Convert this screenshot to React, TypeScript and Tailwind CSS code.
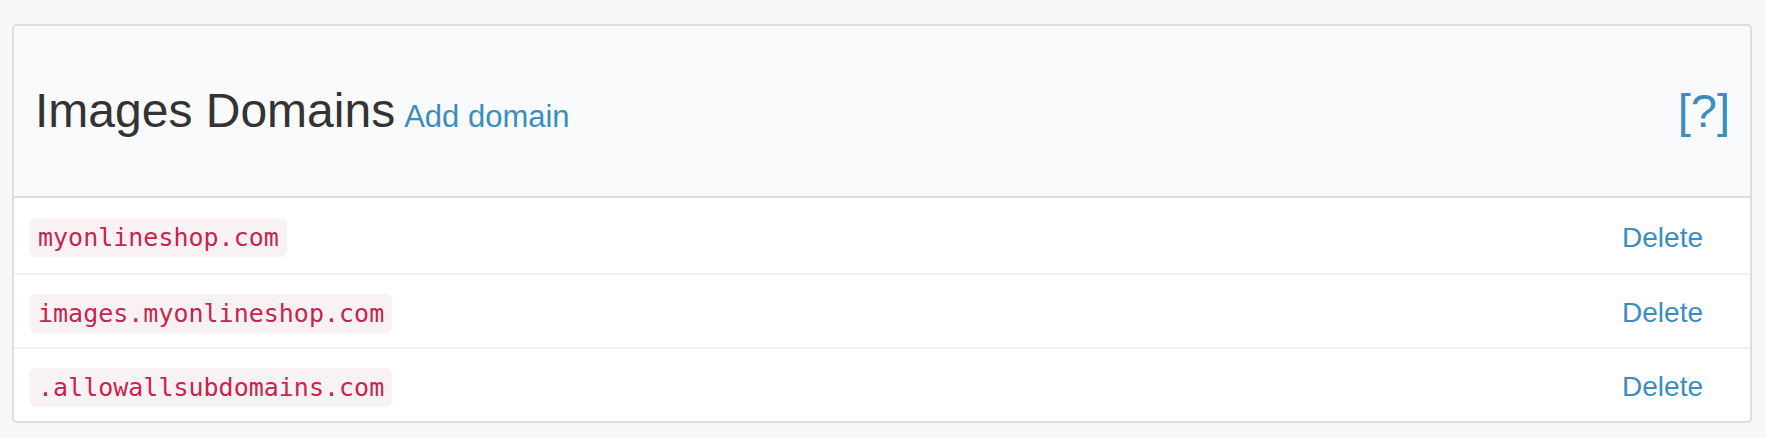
const DOMAINS = ["myonlineshop.com", "images.myonlineshop.com", ".allowallsubdomains.com"];

/** Panel listing the domains images may be loaded from. */
export default function App() {
  return (
    <div className="min-h-[438px] bg-[#f7f7f7] pt-[24px] pb-[15px] pl-[12px] pr-[14px] font-['Liberation_Sans',Arial,sans-serif]">
      <div className="rounded-[5px] border-2 border-[#dedede] bg-white">
        <div className="flex h-[172px] items-baseline justify-between rounded-t-[4px] border-b-2 border-[#dcdcdc] bg-[#f9fafb] pl-[21px] pr-[20px] pt-[61px]">
          <h1 className="flex items-baseline text-[48px] leading-none text-[#333333]">
            Images Domains
            <a href="#" className="ml-[9px] text-[31px] text-[#3c8dbc]">
              Add domain
            </a>
          </h1>
          <a href="#" className="text-[47px] leading-none text-[#3c8dbc]">
            [?]
          </a>
        </div>

        {DOMAINS.map((d, i) => (
          <div
            key={d}
            className={
              i === 0
                ? "flex h-[75px] items-center justify-between pl-[16px] pr-[47px] pt-[4px]"
                : "flex h-[74px] items-center justify-between border-t-2 border-[#f0f0f0] pl-[16px] pr-[47px] pt-[4px]"
            }
          >
            <code className="rounded-[6px] bg-[#f9f2f4] px-[8px] py-[4px] font-['DejaVu_Sans_Mono',monospace] text-[25px] leading-[31px] text-[#c7254e]">
              {d}
            </code>
            <a href="#" className="text-[28px] leading-none text-[#3c8dbc]">
              Delete
            </a>
          </div>
        ))}
      </div>
    </div>
  );
}
